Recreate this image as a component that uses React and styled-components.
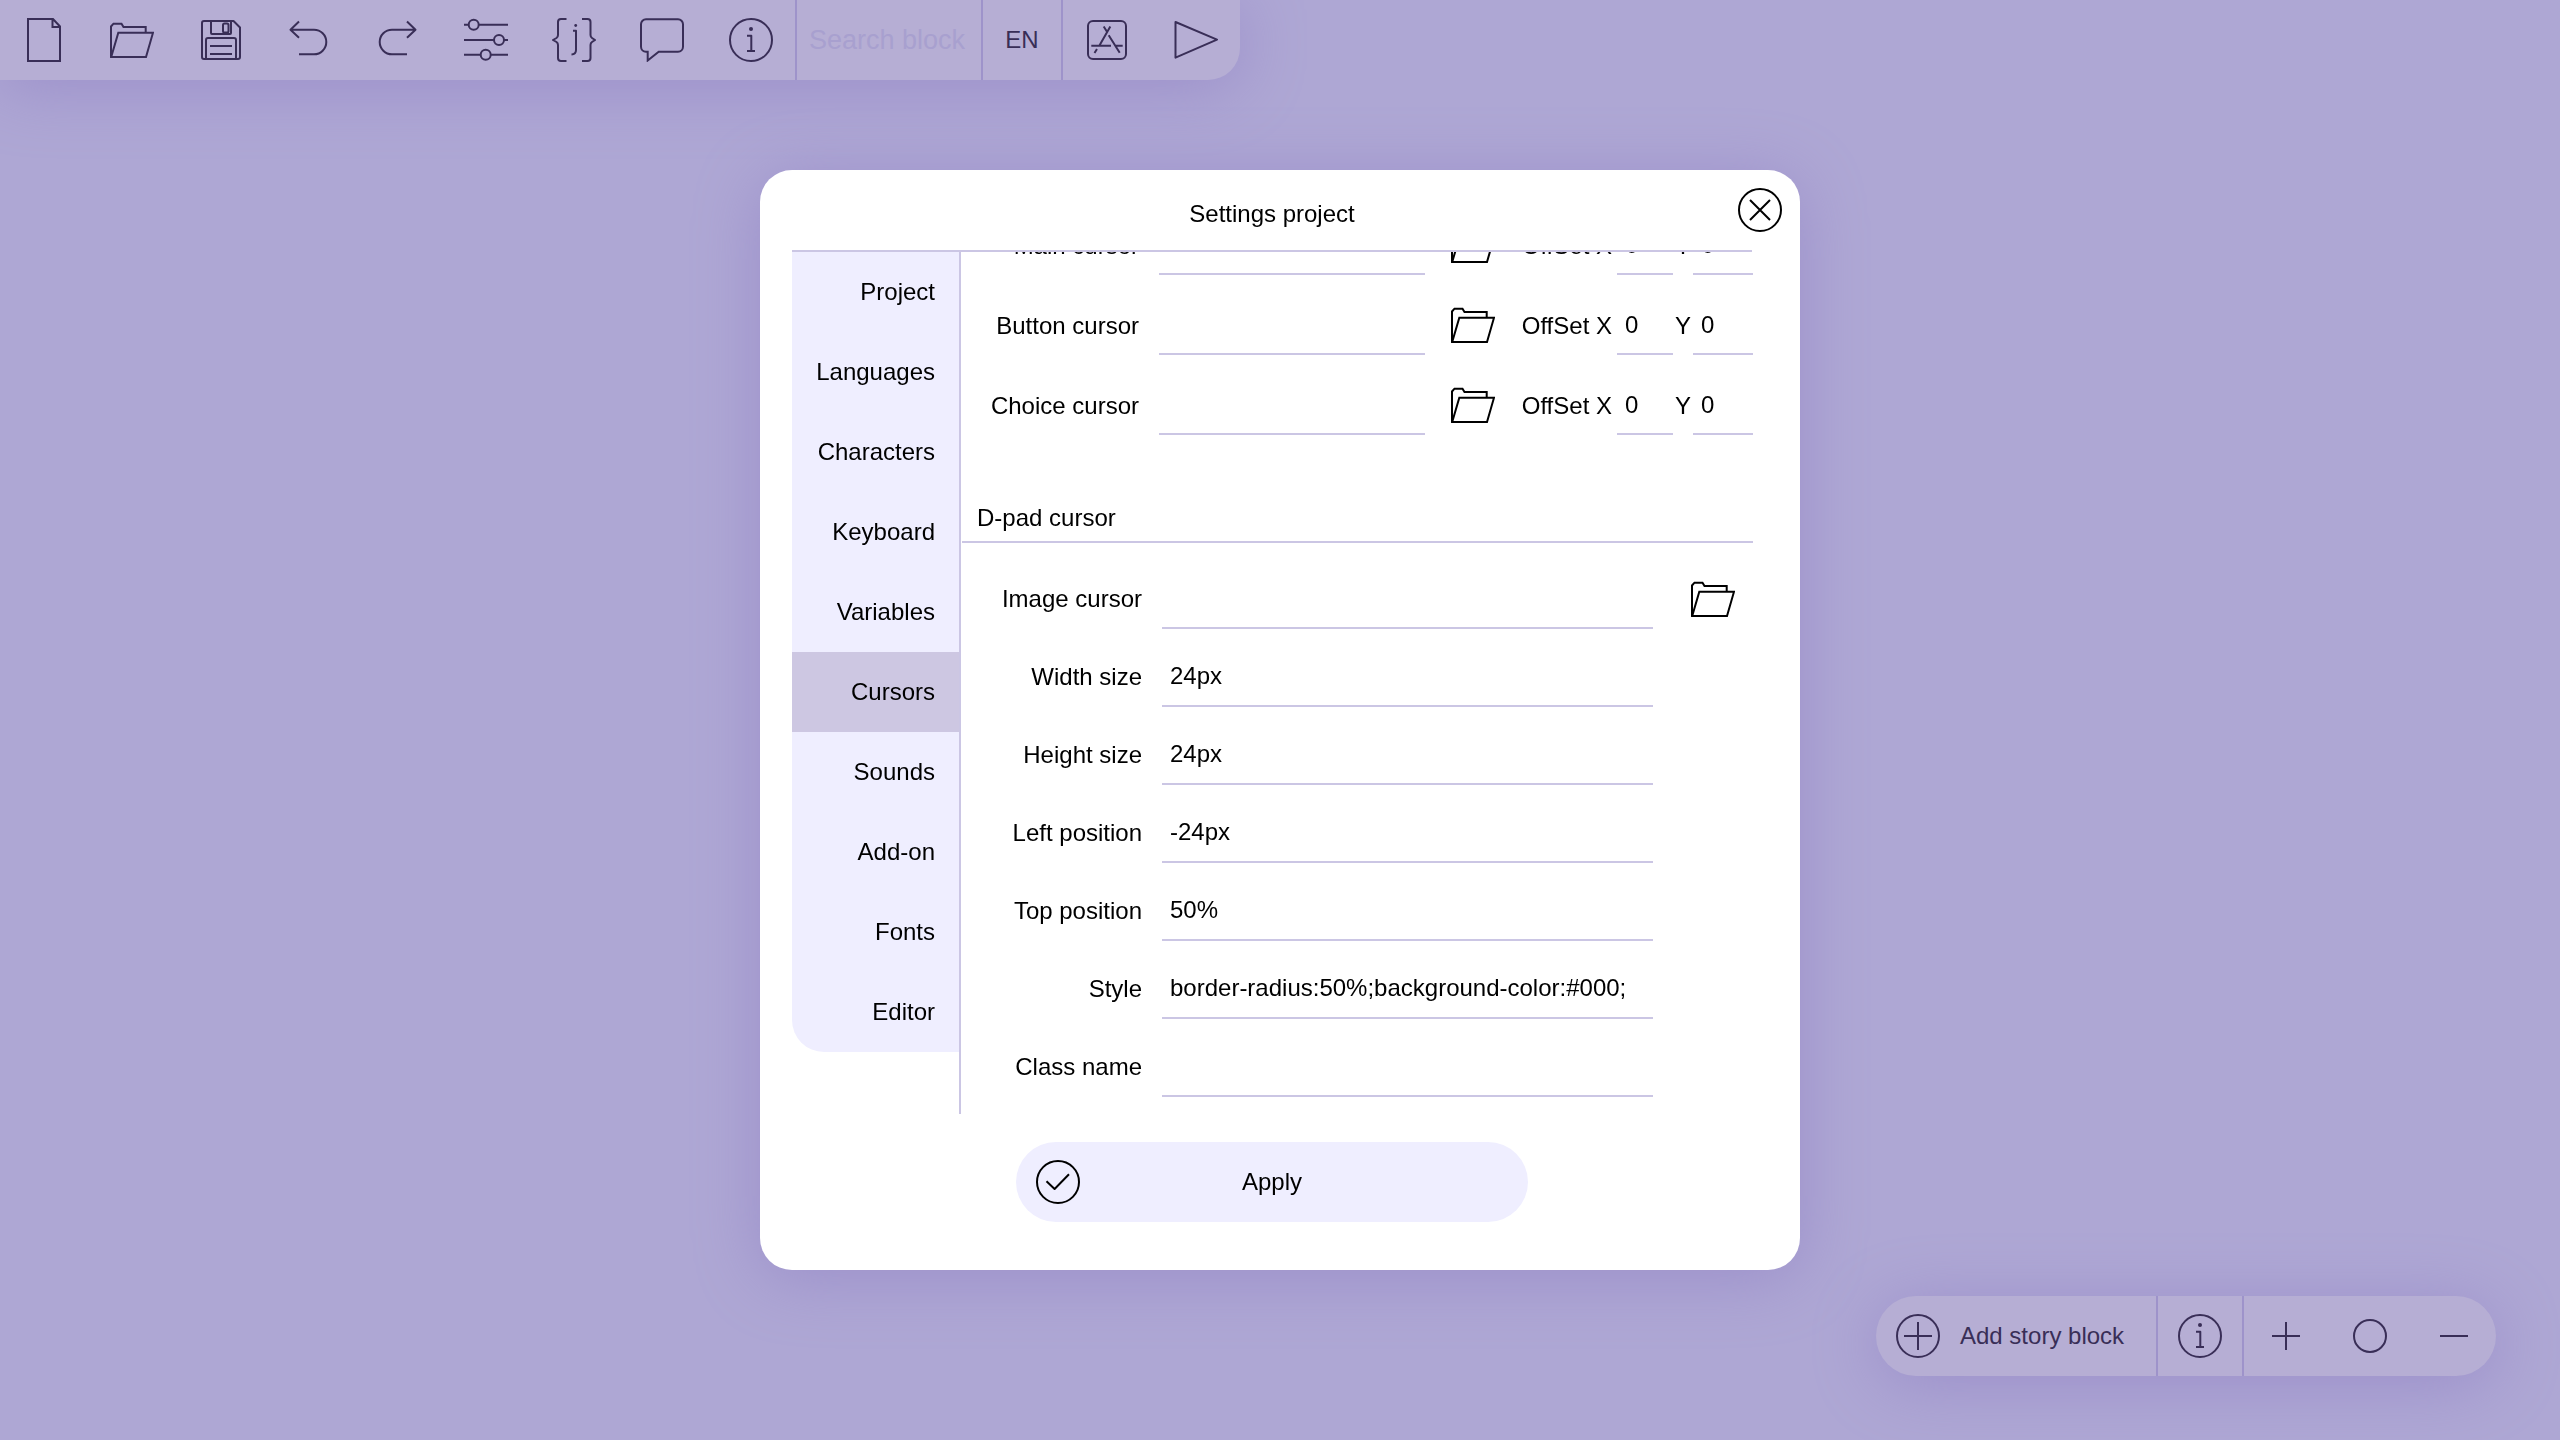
import React, { useLayoutEffect, useRef, useState } from "react";
import styled, { createGlobalStyle, css } from "styled-components";

const color = {
  canvas: "#aea7d4",
  bar: "#b6aed4",
  barLine: "#9e93ca",
  barInk: "#392e57",
  placeholder: "#a8a0cf",
  shadow: "#9b8fca",
  paper: "#ffffff",
  tint: "#efeeff",
  active: "#cdc7e2",
  line: "#cbc6e4",
  ink: "#000000",
};

const GlobalStyle = createGlobalStyle`
  *, *::before, *::after { box-sizing: border-box; }
  body { margin: 0; background: ${color.canvas}; }
  body, button, input {
    font-family: "Liberation Sans", Arial, Helvetica, sans-serif;
    font-size: 24px;
    line-height: 28px;
  }
`;

const resetButton = css`
  display: flex;
  align-items: center;
  justify-content: center;
  margin: 0;
  padding: 0;
  border: 0;
  background: none;
  color: inherit;
  cursor: pointer;
`;

const Page = styled.div`
  min-height: 100vh;
  display: flex;
  flex-direction: column;
  align-items: flex-start;
  justify-content: space-between;
  background: ${color.canvas};
`;

/* Toolbars */

const Bar = styled.nav`
  display: flex;
  height: 80px;
  background: ${color.bar};
  color: ${color.barInk};
  box-shadow: 0 8px 64px ${color.shadow};
`;

const TopBar = styled(Bar)`
  border-bottom-right-radius: 32px;
`;

const BottomBar = styled(Bar)`
  align-self: flex-end;
  margin: 0 64px 64px 0;
  border-radius: 40px;
`;

const BarGroup = styled.div`
  display: flex;
  width: ${(p) => p.$width}px;

  & + &, input + & {
    box-sizing: content-box;
    border-left: 2px solid ${color.barLine};
  }
`;

const BarButton = styled.button`
  ${resetButton}
  flex: 1;
  min-width: 0;
`;

const AddButton = styled.button`
  ${resetButton}
  flex: 1;
  justify-content: flex-start;
  gap: 20px;
  padding-left: 20px;
`;

const SearchInput = styled.input`
  box-sizing: content-box;
  width: 168px;
  padding: 0 4px 0 12px;
  border: 0;
  border-left: 2px solid ${color.barLine};
  outline: 0;
  background: none;
  color: ${color.barInk};
  font-size: 27px;

  &::placeholder {
    color: ${color.placeholder};
    opacity: 1;
  }
`;

/* Dialog */

const Backdrop = styled.div`
  position: fixed;
  inset: 0;
  display: flex;
  align-items: center;
  justify-content: center;
`;

const Dialog = styled.section`
  position: relative;
  display: flex;
  flex-direction: column;
  width: 1040px;
  max-width: 100vw;
  height: 1100px;
  max-height: 100vh;
  padding: 0 48px 48px 32px;
  border-radius: 32px;
  background: ${color.paper};
  color: ${color.ink};
  box-shadow: 0 8px 64px ${color.shadow};
`;

const DialogHeader = styled.header`
  display: flex;
  align-items: center;
  justify-content: center;
  height: 82px;
  padding-top: 8px;
  border-bottom: 2px solid ${color.line};
`;

const Title = styled.h1`
  margin: 0;
  font-size: 24px;
  font-weight: 400;
`;

const CloseButton = styled.button`
  ${resetButton}
  position: absolute;
  top: 18px;
  right: 18px;
`;

const DialogBody = styled.div`
  flex: 1;
  min-height: 0;
  display: flex;
`;

const Tabs = styled.div`
  display: flex;
  flex-direction: column;
  width: 169px;
  border-right: 2px solid ${color.line};
`;

const Tab = styled.button`
  ${resetButton}
  justify-content: flex-end;
  height: 80px;
  padding-right: 24px;
  background: ${(p) => (p.$active ? color.active : color.tint)};

  &:last-child {
    border-bottom-left-radius: 32px;
  }
`;

const Panel = styled.div`
  flex: 1;
  min-width: 0;
  margin-right: -1px;
  padding: 20px 0 17px 1px;
  overflow-y: auto;
  scrollbar-width: none;
`;

const CursorList = styled.div`
  display: grid;
  gap: 20px;
`;

const CursorRow = styled.div`
  display: grid;
  grid-template-columns: 197px 1fr 96px 96px 56px 20px 60px;
  height: 60px;

  > * {
    padding-top: 2px;
  }
`;

const SectionTitle = styled.h2`
  display: flex;
  align-items: center;
  height: 50px;
  margin: 58px 0 26px;
  padding: 2px 0 0 15px;
  border-bottom: 2px solid ${color.line};
  font-size: 24px;
  font-weight: 400;
`;

const FieldList = styled.div`
  display: grid;
  gap: 18px;
`;

const FieldRow = styled.div`
  display: grid;
  grid-template-columns: 200px 1fr 100px;
  height: 60px;
`;

const Label = styled.label`
  display: flex;
  align-items: center;
  justify-content: flex-end;
  padding-right: ${(p) => p.$gap ?? 20}px;
  white-space: nowrap;
`;

const Field = styled.input`
  width: 100%;
  min-width: 0;
  padding-left: 8px;
  padding-right: 8px;
  border: 0;
  border-bottom: 2px solid ${color.line};
  border-radius: 0;
  outline: 0;
  background: none;
  color: ${color.ink};
`;

const FileButton = styled.button`
  ${resetButton}
  width: 80px;
  justify-self: ${(p) => p.$align || "center"};
`;

const ApplyButton = styled.button`
  ${resetButton}
  display: grid;
  grid-template-columns: 44px 1fr 44px;
  align-self: center;
  width: 512px;
  height: 80px;
  margin-top: 28px;
  padding: 0 20px;
  border-radius: 40px;
  background: ${color.tint};
`;

/* Icons */

const Svg = styled.svg`
  display: block;
  flex: none;
  width: 44px;
  height: 44px;
  fill: none;
  stroke: currentColor;
  stroke-width: 2;
  stroke-linejoin: round;
`;

const InfoShape = (
  <>
    <circle cx="22" cy="22" r="21" />
    <circle cx="22" cy="11" r="2" fill="currentColor" stroke="none" />
    <path d="M18 17.7H22.3V33M18 33H26" />
  </>
);

const shapes = {
  file: <path d="M6 1H31L38 8.5V43H6ZM30.5 1V9H38" strokeLinejoin="miter" />,
  folder: (
    <path
      d="M1 39V8.5L3.5 5.7H11.5L13.5 9H35.7V14.7M8.3 14.7H43L36 39H1.2Z"
      strokeLinejoin="miter"
    />
  ),
  save: (
    <>
      <path d="M5 3H34.5L41 9.5V39A2 2 0 0 1 39 41H5A2 2 0 0 1 3 39V5A2 2 0 0 1 5 3Z" />
      <path d="M12 3V15A1 1 0 0 0 13 16H31A1 1 0 0 0 32 15V3" />
      <rect x="24" y="5.5" width="5.5" height="9" rx="1.5" />
      <path d="M7 41V22A2 2 0 0 1 9 20H35A2 2 0 0 1 37 22V41M11 28H33M11 36H33" />
    </>
  ),
  undo: <path d="M12 3.5L3.5 11.7L12 19.7M3.5 11.7H27A12.3 12.3 0 0 1 27 36.3H12" />,
  redo: <path d="M32 3.5L40.5 11.7L32 19.7M40.5 11.7H17A12.3 12.3 0 0 0 17 36.3H32" />,
  sliders: (
    <>
      <circle cx="9.7" cy="6.7" r="5" />
      <circle cx="35" cy="22" r="5" />
      <circle cx="21.7" cy="36.7" r="5" />
      <path d="M0 6.7H4.7M14.7 6.7H44M0 22H30M40 22H44M0 36.7H16.7M26.7 36.7H44" />
    </>
  ),
  braces: (
    <>
      <path d="M14.5 1H9A3 3 0 0 0 6 4V17Q6 19 4.5 20L1 22L4.5 24Q6 25 6 27V40A3 3 0 0 0 9 43H14.5" />
      <path d="M30 1H35.5A3 3 0 0 1 38.5 4V17Q38.5 19 40 20L43 22L40 24Q38.5 25 38.5 27V40A3 3 0 0 1 35.5 43H30" />
      <circle cx="23.7" cy="7.5" r="1.4" fill="currentColor" stroke="none" />
      <path d="M21 12.7H24V32Q24 36.3 19.5 36.5" />
    </>
  ),
  comment: (
    <path
      d="M6 1.3H38A5 5 0 0 1 43 6.3V28.7A5 5 0 0 1 38 33.7H18.7L7.7 42.5V33.7H6A5 5 0 0 1 1 28.7V6.3A5 5 0 0 1 6 1.3Z"
      strokeLinejoin="miter"
    />
  ),
  info: InfoShape,
  apps: (
    <>
      <rect x="3" y="3" width="38" height="38" rx="5" />
      <path d="M25.3 8.5L14.3 27.7M18.7 8.5L22 13.7M23.7 17.3L34.7 34.7M6.3 27.7H26M29.7 27.7H37.7M12 31L9.5 35" />
    </>
  ),
  play: <path d="M1.5 4L43 21.7L1.5 39.7Z" />,
  close: <path d="M12 12L32 32M32 12L12 32M43 22A21 21 0 1 1 1 22A21 21 0 1 1 43 22Z" />,
  check: (
    <>
      <circle cx="22" cy="22" r="21" />
      <path d="M10.5 21.3L18.6 29L33 14.3" />
    </>
  ),
  add: (
    <>
      <circle cx="22" cy="22" r="21" />
      <path d="M8 22H36M22 8V36" />
    </>
  ),
  plus: <path d="M8 22H36M22 8V36" />,
  circle: <circle cx="22" cy="22" r="16" />,
  minus: <path d="M8 22H36" />,
};

const Icon = ({ name }) => (
  <Svg viewBox="0 0 44 44" aria-hidden="true">
    {shapes[name]}
  </Svg>
);

/* Data */

const tools = [
  ["file", "New project"],
  ["folder", "Open project"],
  ["save", "Save project"],
  ["undo", "Undo"],
  ["redo", "Redo"],
  ["sliders", "Settings"],
  ["braces", "Custom script"],
  ["comment", "Comment"],
  ["info", "About"],
];

const tabs = [
  "Project", "Languages", "Characters", "Keyboard", "Variables",
  "Cursors", "Sounds", "Add-on", "Fonts", "Editor",
];

const cursors = [
  ["main", "Main cursor"],
  ["button", "Button cursor"],
  ["choice", "Choice cursor"],
];

const dpadFields = [
  { id: "image", label: "Image cursor", value: "", file: true },
  { id: "width", label: "Width size", value: "24px" },
  { id: "height", label: "Height size", value: "24px" },
  { id: "left", label: "Left position", value: "-24px" },
  { id: "top", label: "Top position", value: "50%" },
  { id: "style", label: "Style", value: "border-radius:50%;background-color:#000;" },
  { id: "class", label: "Class name", value: "" },
];

function ToolButton({ icon, label }) {
  return (
    <BarButton type="button" aria-label={label}>
      <Icon name={icon} />
    </BarButton>
  );
}

function CursorFields({ id, label }) {
  return (
    <CursorRow>
      <Label htmlFor={`${id}-file`}>{label}</Label>
      <Field id={`${id}-file`} type="text" />
      <FileButton type="button" aria-label={`Choose ${label}`}>
        <Icon name="folder" />
      </FileButton>
      <Label htmlFor={`${id}-x`} $gap={5}>OffSet X</Label>
      <Field id={`${id}-x`} type="text" defaultValue="0" />
      <Label htmlFor={`${id}-y`} $gap={2}>Y</Label>
      <Field id={`${id}-y`} type="text" defaultValue="0" />
    </CursorRow>
  );
}

function CursorsPanel() {
  const panel = useRef(null);

  useLayoutEffect(() => {
    panel.current.scrollTop = panel.current.scrollHeight;
  }, []);

  return (
    <Panel ref={panel}>
      <CursorList>
        {cursors.map(([id, label]) => (
          <CursorFields key={id} id={id} label={label} />
        ))}
      </CursorList>
      <SectionTitle>D-pad cursor</SectionTitle>
      <FieldList>
        {dpadFields.map((f) => (
          <FieldRow key={f.id}>
            <Label htmlFor={`dpad-${f.id}`}>{f.label}</Label>
            <Field id={`dpad-${f.id}`} type="text" defaultValue={f.value} />
            {f.file && (
              <FileButton type="button" $align="end" aria-label="Choose D-pad image">
                <Icon name="folder" />
              </FileButton>
            )}
          </FieldRow>
        ))}
      </FieldList>
    </Panel>
  );
}

export default function App() {
  const [tab, setTab] = useState("Cursors");

  return (
    <>
      <GlobalStyle />
      <Page>
        <TopBar aria-label="Main">
          <BarGroup $width={795}>
            {tools.map(([icon, label]) => (
              <ToolButton key={icon} icon={icon} label={label} />
            ))}
          </BarGroup>
          <SearchInput type="text" placeholder="Search block" aria-label="Search block" />
          <BarGroup $width={78}>
            <BarButton type="button">EN</BarButton>
          </BarGroup>
          <BarGroup $width={177}>
            <ToolButton icon="apps" label="Build" />
            <ToolButton icon="play" label="Play" />
          </BarGroup>
        </TopBar>

        <BottomBar aria-label="Canvas">
          <BarGroup $width={280}>
            <AddButton type="button">
              <Icon name="add" />
              Add story block
            </AddButton>
          </BarGroup>
          <BarGroup $width={84}>
            <ToolButton icon="info" label="Help" />
          </BarGroup>
          <BarGroup $width={252}>
            <ToolButton icon="plus" label="Zoom in" />
            <ToolButton icon="circle" label="Reset zoom" />
            <ToolButton icon="minus" label="Zoom out" />
          </BarGroup>
        </BottomBar>
      </Page>

      <Backdrop>
        <Dialog role="dialog" aria-labelledby="dialog-title">
          <DialogHeader>
            <Title id="dialog-title">Settings project</Title>
            <CloseButton type="button" aria-label="Close">
              <Icon name="close" />
            </CloseButton>
          </DialogHeader>
          <DialogBody>
            <Tabs>
              {tabs.map((name) => (
                <Tab
                  key={name}
                  type="button"
                  $active={name === tab}
                  onClick={() => setTab(name)}
                >
                  {name}
                </Tab>
              ))}
            </Tabs>
            <CursorsPanel />
          </DialogBody>
          <ApplyButton type="button">
            <Icon name="check" />
            <span>Apply</span>
          </ApplyButton>
        </Dialog>
      </Backdrop>
    </>
  );
}
